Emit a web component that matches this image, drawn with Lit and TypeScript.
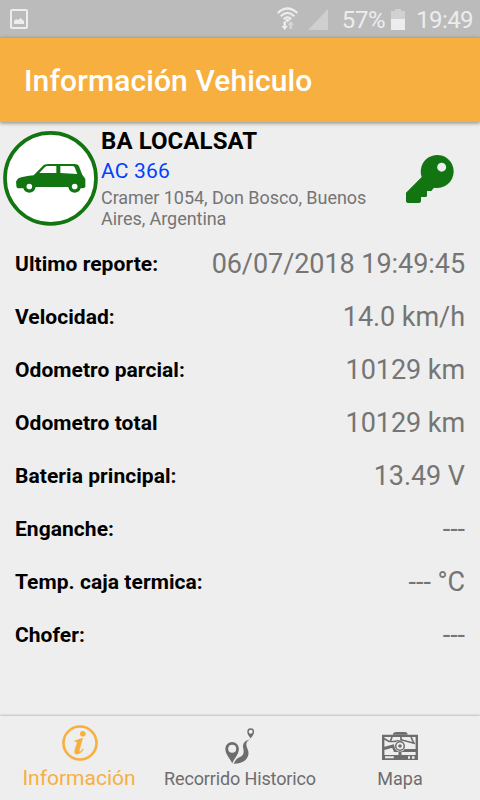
import { LitElement, html, css, svg } from "lit";
import { customElement } from "lit/decorators.js";

const ROWS: { label: string; value: string }[] = [
  { label: "Ultimo reporte:", value: "06/07/2018 19:49:45" },
  { label: "Velocidad:", value: "14.0 km/h" },
  { label: "Odometro parcial:", value: "10129 km" },
  { label: "Odometro total", value: "10129 km" },
  { label: "Bateria principal:", value: "13.49 V" },
  { label: "Enganche:", value: "---" },
  { label: "Temp. caja termica:", value: "--- °C" },
  { label: "Chofer:", value: "---" },
];

@customElement("status-bar")
export class StatusBar extends LitElement {
  static styles = css`
    :host { display: flex; align-items: center; height: 38px; box-sizing: border-box; padding: 0 7px 0 10px; background: #bbb; color: #ededed; font-size: 24px; line-height: 38px; }
    svg { display: block; flex: none; }
    .space { flex: 1; }
    .wifi { margin-right: 10px; }
    .signal { margin-right: 14px; }
    .level { margin-right: 6px; letter-spacing: -.4px; }
    .battery { margin-right: 11px; }
    .time { letter-spacing: -.6px; }
    .text { padding-top: 2px; }
  `;
  render() {
    return html`
      <svg width="18" height="20" viewBox="0 0 18 20">
        <rect x="1" y="1" width="16" height="18" rx="1" fill="none" stroke="#ededed" stroke-width="2" />
        <path d="M4 15V12L6 10L8 11L10.5 9L14 12V15Z" fill="#ededed" />
      </svg>
      <span class="space"></span>
      <svg class="wifi" width="21" height="24" viewBox="0 0 21 24">
        <g fill="none" stroke="#ededed" stroke-width="2.2">
          <path d="M.7 6Q10.5 -3 20.3 6" /><path d="M3.7 9.2Q10.5 2.600 17.3 9.2" /><path d="M6.8 12.2Q10.5 8.3 14.2 12.2" />
        </g>
        <path d="M8 13L10.5 15.5L13 13Q10.5 11 8 13Z" fill="#ededed" />
        <path d="M6.5 14.5H9V19H11L7.7 23L4.5 19H6.5Z" fill="#ededed" />
        <path d="M12.5 22V18H10.5L14 14L17 18H15V22Z" fill="#d5d5d5" />
      </svg>
      <svg class="signal" width="20" height="21" viewBox="0 0 20 21"><path d="M20 0V21H0Z" fill="#cfcfcf" /></svg>
      <span class="level text">57%</span>
      <svg class="battery" width="14" height="21" viewBox="0 0 14 21">
        <path d="M0 2H4V0H10V2H14V10H0Z" fill="#d1d1d1" /><path d="M0 10H14V21H0Z" fill="#ededed" />
      </svg>
      <span class="time text">19:49</span>
    `;
  }
}

const infoIcon = svg`
  <circle cx="18" cy="18" r="16.5" fill="none" stroke="currentColor" stroke-width="2.6" />
  <circle cx="20.8" cy="8.8" r="2.8" fill="currentColor" />
  <path d="M12.5 15.8Q16 14.2 21 12.8L17.5 25.3Q17.1 27 18.2 26.4Q19.7 25.3 21 23.5L21.8 24.2Q18.7 29.2 14.5 29.4Q11.6 29 12.5 25.6L14.8 18Q15.3 16.2 12.5 16.9Z" fill="currentColor" />`;

const routeIcon = svg`
  <path fill="currentColor" fill-rule="evenodd" d="M12.5 33.7C11.8 29.8 5.6 25 5.6 18.7A6.8 6.8 0 0 1 19.2 18.7C19.2 25 13.2 29.8 12.5 33.7ZM12.5 14.7A4 4 0 1 0 12.5 22.7A4 4 0 1 0 12.5 14.7Z" />
  <path fill="currentColor" fill-rule="evenodd" d="M31 8.7C30.7 7 27.6 5.2 27.6 1.7A3.4 3.4 0 0 1 34.4 1.7C34.4 5.2 31.3 7 31 8.7ZM31 -.3A2 2 0 1 0 31 3.7A2 2 0 1 0 31 -.3Z" />
  <path fill="currentColor" d="M30.5 9.3Q24 11 23.3 15.3C23 18.2 24.8 20.4 23.5 24Q22.4 27 18.8 27.8Q16.3 28.8 14 33.7Q21 34 25.5 30.3C29.2 26.5 29.2 23 28.3 20.2C27.1 16.5 24.3 12.5 30.5 9.3Z" />`;

const mapIcon = svg`
  <path fill="currentColor" d="M11 4.7V3.5Q12 2 14 2H23Q25 2 25.500 3.5V4.7Z" />
  <path fill="currentColor" fill-rule="evenodd" d="M0 4.7H36V30H0ZM2.4 7V25H33.6V7ZM3 26.2V28.2H11.8V26.2ZM26 26.2V28.7H28V26.2ZM30 26.2V28.7H32.5V26.2Z" />
  <g fill="none" stroke="currentColor">
    <path stroke-width="1.7" d="M2 8.500L7 11.5H12L20 10L33 13.5M10 7L8.5 11M19 7V10M29 7L31.5 12.5" />
    <path stroke-width="3" d="M2 18.5L11 16L13 20.500H34M18 20V25" />
  </g>
  <circle cx="18" cy="16" r="5.600" fill="#eee" />
  <circle cx="18" cy="16" r="4.3" fill="none" stroke="currentColor" stroke-width="1.5" />
  <circle cx="18" cy="16" r="1.8" fill="currentColor" />`;

@customElement("app-root")
export class AppRoot extends LitElement {
  static styles = css`
    :host { display: flex; flex-direction: column; width: 480px; height: 800px; overflow: hidden; background: #eee; font-family: Roboto, "Noto Sans", sans-serif; color: #757575; }
    svg { display: block; flex: none; overflow: visible; }
    .bar { flex: none; display: flex; align-items: center; height: 84px; padding-left: 24px; background: #f7af40; color: #fff; font-size: 30px; font-weight: 500; letter-spacing: .1px; box-shadow: 0 1px 4px rgba(0, 0, 0, .45); box-sizing: border-box; padding-top: 1px; }
    .vehicle { flex: none; display: flex; height: 115px; box-sizing: border-box; padding-top: 4px; }
    .avatar { margin: 4px 3px 0 2px; }
    .details { width: 290px; }
    .name { color: #000; font-size: 24px; font-weight: 700; line-height: 30px; letter-spacing: .08px; }
    .plate { color: #0041ff; font-size: 21px; line-height: 30px; letter-spacing: .2px; }
    .address { font-size: 18px; line-height: 21px; padding-top: 1px; letter-spacing: -.05px; }
    .key { margin: 29px 0 0 15px; }
    .rows { flex: 1; padding: 0 15px; }
    .row { display: flex; align-items: center; justify-content: space-between; height: 53px; }
    .label { color: #000; font-size: 21px; font-weight: 700; letter-spacing: .05px; }
    .value { font-size: 27px; letter-spacing: -.06px; }
    .tabs { flex: none; display: grid; grid-template-columns: repeat(3, 1fr); height: 84px; box-shadow: 0 -1px 2px rgba(0, 0, 0, .2); }
    .tab { display: flex; flex-direction: column; align-items: center; padding-top: 9px; font-size: 18px; white-space: nowrap; color: #6d6d6d; }
    .tab span { line-height: 24px; margin-top: 6px; }
    .tab.active { color: #f7af40; font-size: 21px; }
    .tab.active span { margin-top: 5px; }
    .active .caption { margin-left: -2px; }
    .tight { letter-spacing: -.14px; }
  `;
  render() {
    return html`
      <status-bar></status-bar>
      <header class="bar">Información Vehiculo</header>
      <section class="vehicle">
        <svg class="avatar" width="96" height="96" viewBox="6 60 288 288">
          <circle cx="151.500" cy="205" r="136.500" fill="#fff" stroke="#127512" stroke-width="11" />
          <path fill="#127512" fill-rule="evenodd" d="M55 235Q48 233 49 224L48 216Q50 210 55 205Q72 199 101 196L129 167Q132 162 146 162H224Q234 162 237 169L246 193L256 207V231Q254 235 242 235A19 19 0 0 1 206 235L205 231H107L106 235A19 19 0 0 1 70 235ZM118 189H169V168H143Q138 168 134 172ZM181 168V189L232 192L224 172Q222 168 217 168ZM88 221A8.500 8.500 0 1 0 88 238A8.500 8.500 0 1 0 88 221ZM224 221A8.500 8.500 0 1 0 224 238A8.500 8.500 0 1 0 224 221Z" />
        </svg>
        <div class="details">
          <div class="name">BA LOCALSAT</div>
          <div class="plate">AC 366</div>
          <div class="address">Cramer 1054, Don Bosco, Buenos Aires, Argentina</div>
        </div>
        <svg class="key" width="48" height="48" viewBox="48 45 144 144">
          <path fill="#127512" fill-rule="evenodd" d="M95 111A49.500 49.500 0 1 1 132 143L124 153H111V168Q110 171 107 171H93V184Q92 189 87 189H53Q48 188 48 183V158ZM155 68A13.500 13.500 0 1 0 155 95A13.500 13.500 0 1 0 155 68Z" />
        </svg>
      </section>
      <main class="rows">
        ${ROWS.map((r) => html`<div class="row"><span class="label">${r.label}</span><span class="value">${r.value}</span></div>`)}
      </main>
      <nav class="tabs">
        <div class="tab active"><svg width="36" height="36" viewBox="0 0 36 36">${infoIcon}</svg><span class="caption">Información</span></div>
        <div class="tab"><svg width="36" height="36" viewBox="2.300 -5 36 36">${routeIcon}</svg><span class="tight">Recorrido Historico</span></div>
        <div class="tab"><svg width="36" height="36" viewBox="0 -5 36 36">${mapIcon}</svg><span>Mapa</span></div>
      </nav>
    `;
  }
}
